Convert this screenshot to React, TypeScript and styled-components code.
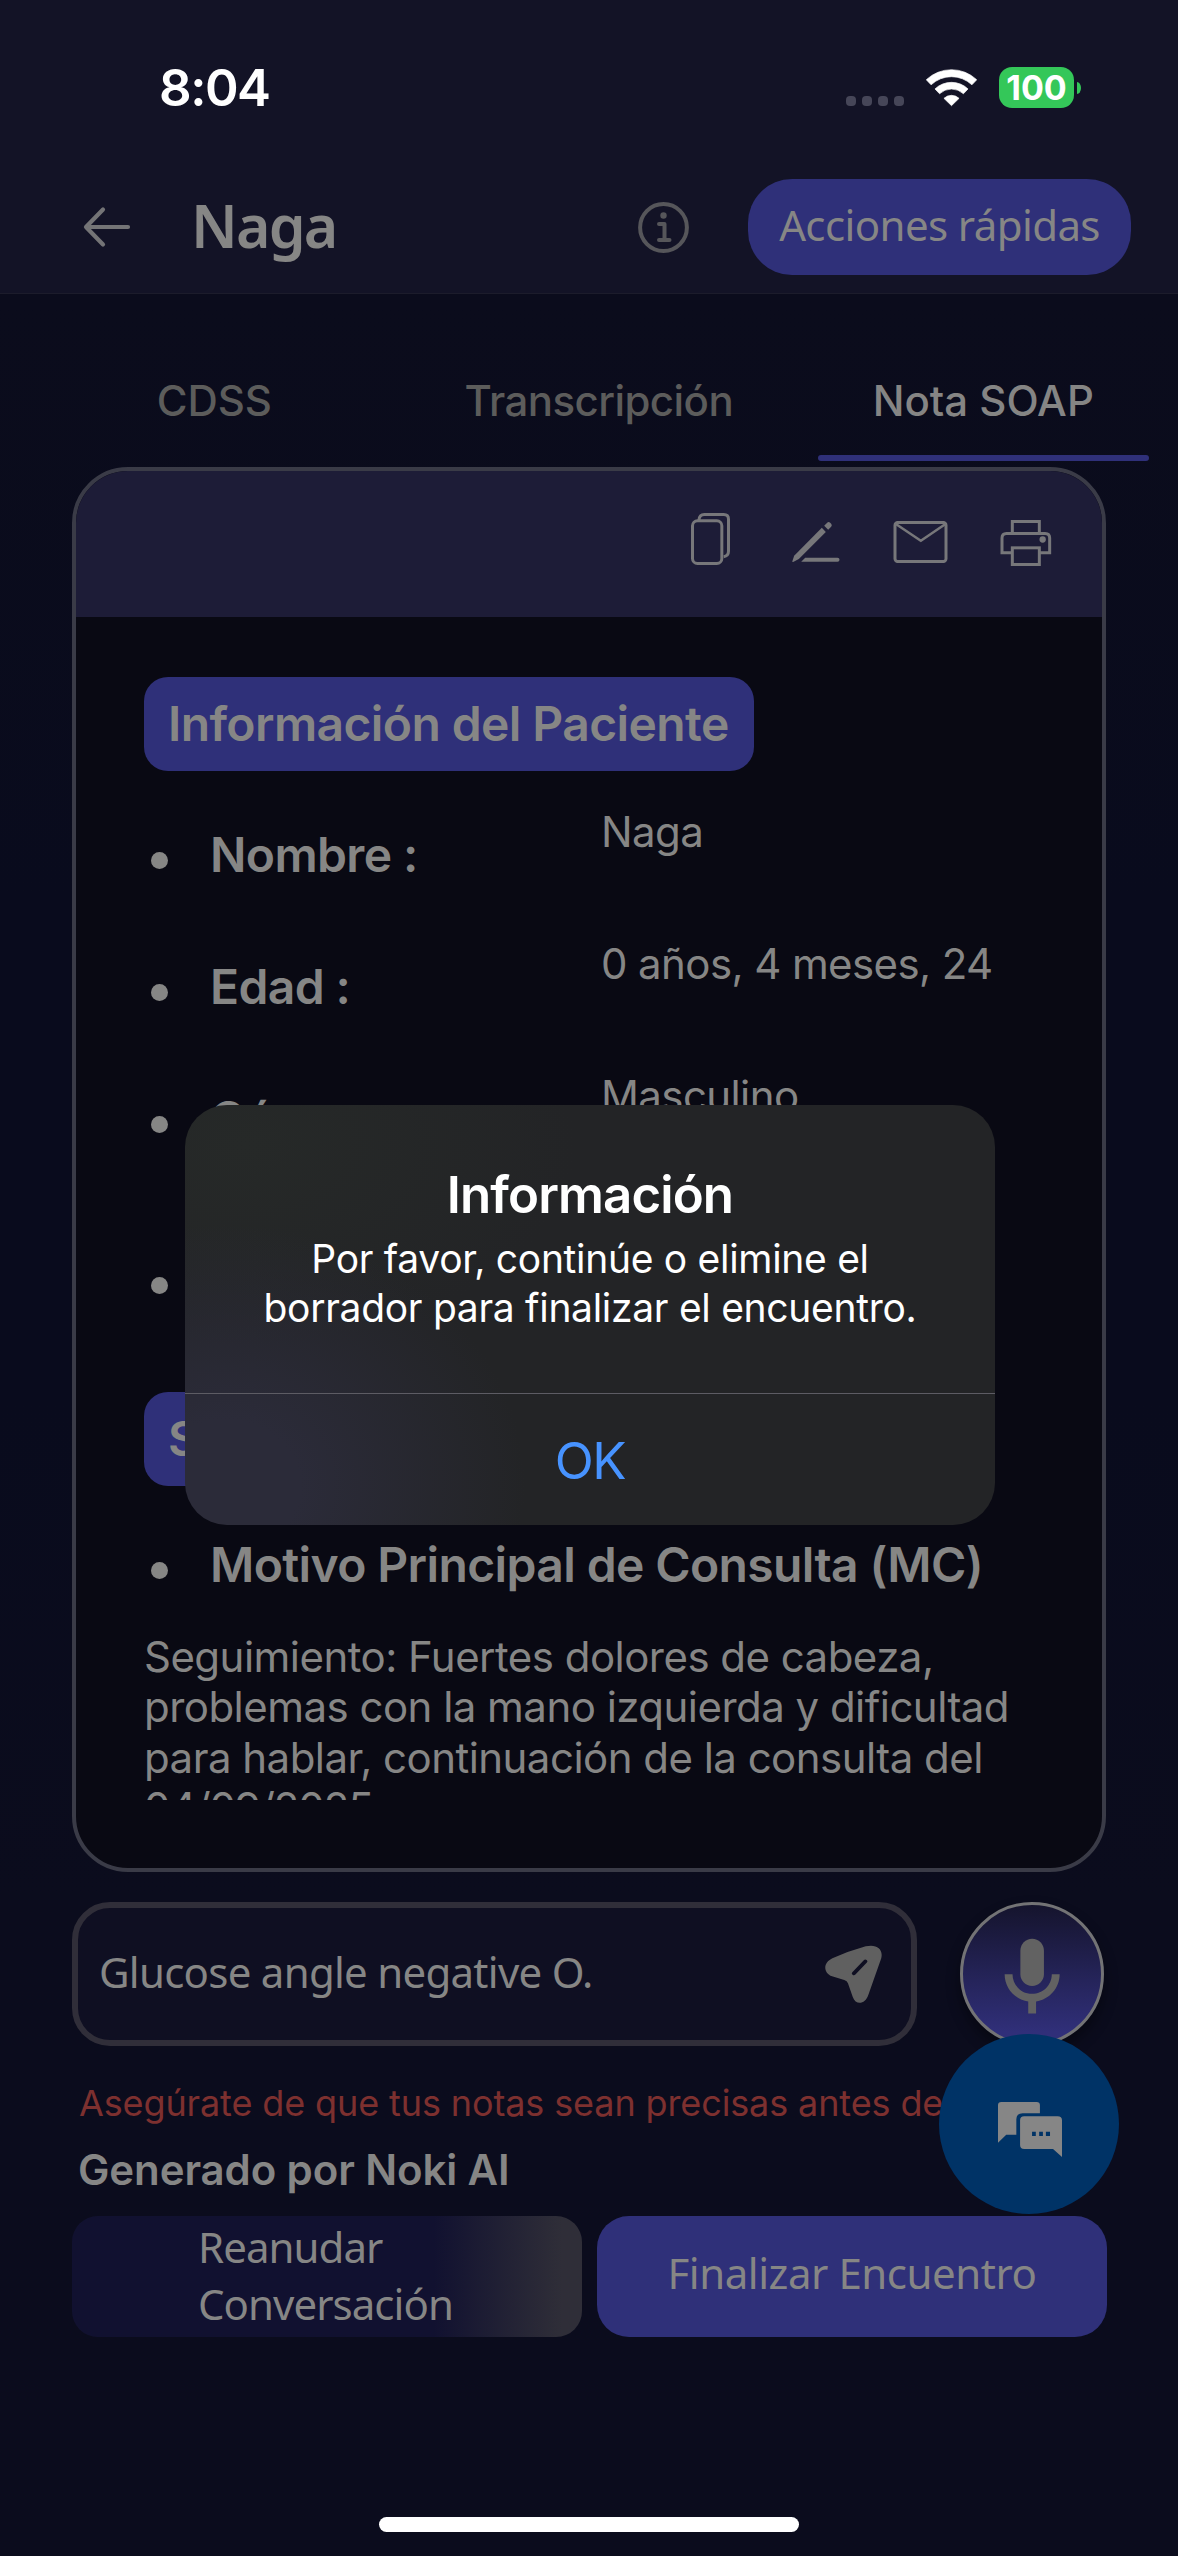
import React from 'react';
import styled, { createGlobalStyle } from 'styled-components';

const c = {
  text: '#868685',
  textDim: '#5c5c5b',
  icon: '#77777a',
  primary: '#2f3079',
  header: '#131326',
  toolbar: '#1d1c37',
  sheet: '#090913',
  cardBorder: '#3a3b47',
  inputBorder: '#302e39',
};

const sans = `Inter, "Liberation Sans", sans-serif`;
const rounded = `"Noto Sans", "Open Sans", sans-serif`;

const GlobalStyle = createGlobalStyle`
  *, *::before, *::after { box-sizing: border-box; }
  body { margin: 0; background: #0b0c1d; }
  button { border: 0; padding: 0; margin: 0; background: none; color: inherit; font: inherit; }
  svg { display: block; flex: none; }
`;

const Screen = styled.main`
  position: relative;
  display: flex;
  flex-direction: column;
  width: 1178px;
  height: 2556px;
  overflow: hidden;
  background: linear-gradient(#0b0c1c 300px, #090b1d 900px, #090b1d 1400px, #0b0c1d 1900px);
  color: ${c.text};
  font-family: ${sans};
`;

/* ---------- header ---------- */

const Header = styled.header`
  height: 294px;
  background: ${c.header};
  border-bottom: 1px solid #1c1c2b;
`;

const StatusBar = styled.div`
  display: flex;
  align-items: center;
  height: 175px;
  padding: 0 97px 0 159px;
  color: #fff;
`;

const Clock = styled.time`
  flex: 1;
  font-size: 51px;
  font-weight: 600;
  letter-spacing: -1.5px;
`;

const Signal = styled.div`
  display: flex;
  gap: 6px;
  margin: 27px 22px 0 0;
`;

const SignalDot = styled.i`
  width: 10px;
  height: 10px;
  border-radius: 4px;
  background: #464658;
`;

const Battery = styled.div`
  display: flex;
  align-items: center;
  justify-content: center;
  width: 75px;
  height: 41px;
  margin: 0 3px 0 22px;
  border-radius: 13px;
  background: #34c759;
  font-size: 34px;
  font-weight: 700;
  line-height: 41px;
`;

const BatteryNub = styled.i`
  width: 4px;
  height: 12px;
  border-radius: 0 4px 4px 0 / 0 6px 6px 0;
  background: #34c759;
`;

const NavBar = styled.nav`
  display: flex;
  align-items: center;
  height: 104px;
  padding: 0 47px 0 82px;
`;

const Title = styled.h1`
  flex: 1;
  margin: 0 0 5px 59px;
  font: 600 59px/80px ${rounded};
  letter-spacing: -1.8px;
`;

const QuickActions = styled.button`
  width: 383px;
  height: 96px;
  margin-left: 59px;
  padding-bottom: 4px;
  border-radius: 44px;
  background: ${c.primary};
  font: 400 42px/60px ${rounded};
  letter-spacing: -0.6px;
`;

/* ---------- tabs ---------- */

const Tabs = styled.div`
  display: grid;
  grid-template-columns: repeat(3, 384.5px);
  height: 173px;
  padding: 77px 0 0 22px;
`;

const Tab = styled.button<{ $active?: boolean }>`
  display: flex;
  flex-direction: column;
  align-items: center;
  color: ${(p) => (p.$active ? '#858584' : c.textDim)};
  font-size: 42px;
  font-weight: 500;
  line-height: 60px;

  &::after {
    content: '';
    width: 331px;
    height: 6px;
    margin-top: 24px;
    border-radius: 3px;
    background: ${(p) => (p.$active ? c.primary : 'transparent')};
  }
`;

const TabLabel = styled.span<{ $tracking: number }>`
  letter-spacing: ${(p) => p.$tracking}px;
`;

/* ---------- note card ---------- */

const Card = styled.section`
  height: 1405px;
  margin: 0 72px;
  padding-bottom: 68px;
  overflow: hidden;
  border: 4px solid ${c.cardBorder};
  border-radius: 56px;
  background: ${c.sheet};
`;

const Toolbar = styled.div`
  display: flex;
  align-items: center;
  justify-content: flex-end;
  height: 146px;
  padding: 2px 24px 0 0;
  background: ${c.toolbar};
`;

const Note = styled.div`
  height: 1183px;
  padding: 60px 68px 0;
  overflow: hidden;
`;

const SectionBadge = styled.h2`
  width: fit-content;
  height: 94px;
  margin: 0;
  padding: 0 25px 0 24px;
  border-radius: 24px;
  background: ${c.primary};
  font-size: 48px;
  font-weight: 600;
  line-height: 94px;
  letter-spacing: -0.6px;
`;

const Rows = styled.ul<{ $top: number }>`
  margin: ${(p) => p.$top}px 0 0;
  padding: 0;
  list-style: none;
`;

const Row = styled.li<{ $height: number }>`
  display: flex;
  height: ${(p) => p.$height}px;
  padding-left: 7px;
  white-space: nowrap;

  &::before {
    content: '';
    flex: none;
    width: 17px;
    height: 17px;
    margin: 46px 42px 0 0;
    border-radius: 50%;
    background: ${c.text};
  }
`;

const Label = styled.h3`
  width: 391px;
  margin: 18px 0 0;
  font-size: 48px;
  font-weight: 600;
  line-height: 62px;
  letter-spacing: -0.62px;
`;

const Value = styled.span`
  padding-top: 1px;
  font-size: 42px;
  line-height: 50px;
  letter-spacing: -0.6px;
`;

const Paragraph = styled.p`
  margin: 0;
  font-size: 42px;
  line-height: 50.3px;
  letter-spacing: -0.53px;
  white-space: nowrap;
`;

const DateText = styled.time`
  letter-spacing: -1.1px;
`;

/* ---------- composer ---------- */

const Composer = styled.div`
  display: flex;
  gap: 43px;
  margin: 30px 72px 0;
`;

const InputBox = styled.div`
  display: flex;
  align-items: center;
  justify-content: space-between;
  width: 845px;
  height: 144px;
  padding: 0 29px 0 21px;
  border: 6px solid ${c.inputBorder};
  border-radius: 38px;
  background: #0f0f22;
`;

const InputText = styled.span`
  padding-bottom: 4px;
  font: 400 42px/60px ${rounded};
  letter-spacing: -0.73px;
`;

const MicButton = styled.button`
  display: flex;
  align-items: center;
  justify-content: center;
  width: 144px;
  height: 144px;
  padding-top: 8px;
  border: 3px solid #737375;
  border-radius: 50%;
  background: linear-gradient(#15142d, #302f79 92%);
  box-shadow: 0 8px 14px rgba(0, 0, 0, 0.4);
`;

const Warning = styled.p`
  margin: 35px 72px 0 79px;
  overflow: hidden;
  color: #7d302f;
  font-size: 36px;
  line-height: 44px;
  letter-spacing: -0.12px;
  white-space: nowrap;
`;

const Credit = styled.p`
  margin: 15px 78px 0;
  font-size: 42px;
  font-weight: 600;
  line-height: 60px;
  letter-spacing: -0.11px;
`;

const Actions = styled.div`
  display: grid;
  grid-template-columns: 1fr 1fr;
  gap: 15px;
  height: 121px;
  margin: 16px 71px 0 72px;
`;

const ActionButton = styled.button<{ $primary?: boolean }>`
  padding: ${(p) => (p.$primary ? '0 0 7px' : '0 0 3px 126px')};
  border-radius: ${(p) => (p.$primary ? 32 : 26)}px;
  background: ${(p) =>
    p.$primary ? c.primary : 'linear-gradient(90deg, #111130 71%, #2f2e38 96%)'};
  font: 400 42px/57.5px ${rounded};
  letter-spacing: ${(p) => (p.$primary ? -0.45 : -0.95)}px;
  text-align: ${(p) => (p.$primary ? 'center' : 'left')};
`;

const HomeIndicator = styled.div`
  width: 420px;
  height: 15px;
  margin: auto auto 24px;
  border-radius: 8px;
  background: #fff;
`;

/* ---------- overlays ---------- */

const ChatBubbleButton = styled.button`
  position: absolute;
  left: 939px;
  top: 2034px;
  display: flex;
  align-items: center;
  justify-content: center;
  width: 180px;
  height: 180px;
  padding: 10px 0 0 2px;
  border-radius: 50%;
  background: #003366;
`;

const Alert = styled.div`
  position: absolute;
  left: 185px;
  top: 1105px;
  display: flex;
  flex-direction: column;
  width: 810px;
  height: 420px;
  border-radius: 42px;
  background: radial-gradient(ellipse 300px 260px at 40px 380px, #2b2b39 25%, rgba(42, 41, 54, 0) 100%),
    radial-gradient(ellipse 330px 200px at 60px 40px, #262928, rgba(38, 41, 40, 0)), #232426;
  color: #fff;
  text-align: center;
`;

const AlertTitle = styled.h2`
  margin: 60px 0 0;
  font-size: 51px;
  font-weight: 600;
  line-height: 60px;
  letter-spacing: -0.9px;
`;

const AlertMessage = styled.p`
  margin: 10px 0 0;
  font-size: 39px;
  line-height: 48.5px;
  letter-spacing: -0.3px;
`;

const AlertButton = styled.button`
  height: 132px;
  margin-top: auto;
  padding-top: 2px;
  border-top: 1px solid #5d5c64;
  color: #4793ff;
  font-size: 51px;
  line-height: 129px;
  letter-spacing: -1.5px;
`;

/* ---------- icons ---------- */

const SIN = 0.688;
const COS = 0.725;

const ring = (outer: number, inner: number) =>
  `M${-outer * SIN} ${-outer * COS}A${outer} ${outer} 0 0 1 ${outer * SIN} ${-outer * COS}` +
  `L${inner * SIN} ${-inner * COS}A${inner} ${inner} 0 0 0 ${-inner * SIN} ${-inner * COS}Z`;

const WifiIcon = () => (
  <svg width="51" height="38" viewBox="-76.5 -112 153 114" fill="#fff" stroke="#fff" strokeWidth="2" strokeLinejoin="round">
    <path d={ring(110, 89)} />
    <path d={ring(72, 52)} />
    <path d={`M0 -2L${-33 * SIN} ${-33 * COS}A33 33 0 0 1 ${33 * SIN} ${-33 * COS}Z`} />
  </svg>
);

const BackIcon = () => (
  <svg width="50" height="44" viewBox="0 0 50 44" fill="none" stroke="#747476" strokeWidth="4.2" strokeLinecap="round" strokeLinejoin="round">
    <path d="M46 22H4M21 4.500L4 22l17 17.500" />
  </svg>
);

const InfoIcon = () => (
  <svg width="51" height="51" viewBox="-25.5 -25.500 51 51" fill="none" stroke="#56565a" strokeWidth="4" strokeLinecap="round" strokeLinejoin="round">
    <circle r="23.4" />
    <path d="M-4.500 -3.500H1V12.500M-4.500 12.500H6" />
    <circle cy="-12" r="3.200" fill="#56565a" stroke="none" />
  </svg>
);

const ToolSvg = ({ cx, children }: { cx: number; children: React.ReactNode }) => (
  <svg width="105" height="110" viewBox={`${cx - 157.5} 0 315 330`} fill="none" stroke={c.icon} strokeWidth="9">
    {children}
  </svg>
);

const CopyIcon = () => (
  <ToolSvg cx={151.5}>
    <rect x="97.500" y="92.500" width="88" height="128" rx="15" />
    <path d="M117 90Q118 73.500 133 73.500H191Q205.500 73.500 205.500 88V184Q205.500 198 191 200" />
  </ToolSvg>
);

const PenIcon = () => (
  <ToolSvg cx={465}>
    <g fill={c.icon} stroke="none">
      <path d="M395 215L401 197L484 113L496 126L415 207L398 216Z" />
      <path d="M491 107L500 98Q504 94 509 98L512 101Q516 106 512 110L503 119Z" />
      <path d="M434 203H531Q537 203 537 209T531 215H422Z" />
    </g>
  </ToolSvg>
);

const MailIcon = () => (
  <ToolSvg cx={783}>
    <rect x="706.500" y="97.500" width="153" height="117" rx="8" />
    <path d="M709 102L784 152L858 102" strokeWidth="7.500" />
  </ToolSvg>
);

const PrintIcon = () => (
  <ToolSvg cx={1097}>
    <path d="M1057.500 128V94.500H1138.500V128" />
    <path d="M1057 188H1026.500V144Q1026.500 130.500 1040 130.500H1156Q1169.500 130.500 1169.500 144V188H1139" />
    <rect x="1057.500" y="173.500" width="81" height="50" />
    <circle cx="1148.500" cy="148.500" r="9.500" fill={c.icon} stroke="none" />
  </ToolSvg>
);

const SendIcon = () => (
  <svg width="57" height="58" viewBox="626 194 154 174" preserveAspectRatio="none">
    <path
      fill="#606060"
      d="M736 198C765 190 784 206 778 234L743 344C735 372 709 376 701 350L688 309Q686 302 678 299L645 288C621 278 620 247 646 234Q690 212 736 198Z"
    />
    <path d="M704 279L735 243" stroke="#0f0f22" strokeWidth="11" strokeLinecap="round" />
  </svg>
);

const MicIcon = () => (
  <svg width="94.300" height="94.300" viewBox="0 0 24 24" fill="#626262">
    <path d="M12 14c1.660 0 3-1.340 3-3V5c0-1.660-1.340-3-3-3S9 3.340 9 5v6c0 1.660 1.340 3 3 3z" />
    <path d="M17 11c0 2.760-2.240 5-5 5s-5-2.240-5-5H5c0 3.530 2.610 6.430 6 6.920V21h2v-3.080c3.390-.490 6-3.390 6-6.920h-2z" />
  </svg>
);

const ChatIcon = () => (
  <svg width="64" height="55" viewBox="1088 666 171 165" preserveAspectRatio="none" fill="#868686">
    <path d="M1088 675Q1088 666 1097 666H1191Q1200 666 1200 675V700H1154Q1137 700 1137 718V764H1110L1088 788Z" />
    <path d="M1147 721Q1147 709 1158 709H1247Q1259 709 1259 721V831L1235 807H1158Q1147 807 1147 795Z" />
    <path fill="#003366" d="M1179 755h10v13h-10zM1198 755h10v13h-10zM1216 755h11v13h-11z" />
  </svg>
);

/* ---------- screen ---------- */

const tabs = [
  { label: 'CDSS', tracking: -0.1 },
  { label: 'Transcripción', tracking: -0.55 },
  { label: 'Nota SOAP', tracking: 0, active: true },
];

const patient = [
  { label: 'Nombre :', value: 'Naga', height: 132 },
  { label: 'Edad :', value: '0 años, 4 meses, 24', height: 132 },
  { label: 'Género :', value: 'Masculino', height: 161 },
  { label: '', value: '', height: 161 },
];

export default function App() {
  return (
    <>
      <GlobalStyle />
      <Screen>
        <Header>
          <StatusBar>
            <Clock>8:04</Clock>
            <Signal>
              {[0, 1, 2, 3].map((i) => (
                <SignalDot key={i} />
              ))}
            </Signal>
            <WifiIcon />
            <Battery>100</Battery>
            <BatteryNub />
          </StatusBar>
          <NavBar>
            <BackIcon />
            <Title>Naga</Title>
            <InfoIcon />
            <QuickActions>Acciones rápidas</QuickActions>
          </NavBar>
        </Header>

        <Tabs>
          {tabs.map((t) => (
            <Tab key={t.label} $active={t.active}>
              <TabLabel $tracking={t.tracking}>{t.label}</TabLabel>
            </Tab>
          ))}
        </Tabs>

        <Card>
          <Toolbar>
            <CopyIcon />
            <PenIcon />
            <MailIcon />
            <PrintIcon />
          </Toolbar>
          <Note>
            <SectionBadge>Información del Paciente</SectionBadge>
            <Rows $top={35}>
              {patient.map((r, i) => (
                <Row key={i} $height={r.height}>
                  <Label>{r.label}</Label>
                  <Value>{r.value}</Value>
                </Row>
              ))}
            </Rows>
            <SectionBadge>Subjetivo</SectionBadge>
            <Rows $top={30}>
              <Row $height={116}>
                <Label>Motivo Principal de Consulta (MC)</Label>
              </Row>
            </Rows>
            <Paragraph>
              Seguimiento: Fuertes dolores de cabeza,
              <br />
              problemas con la mano izquierda y dificultad
              <br />
              para hablar, continuación de la consulta del
              <br />
              <DateText>04/09/2025</DateText>
            </Paragraph>
          </Note>
        </Card>

        <Composer>
          <InputBox>
            <InputText>Glucose angle negative O.</InputText>
            <SendIcon />
          </InputBox>
          <MicButton>
            <MicIcon />
          </MicButton>
        </Composer>

        <Warning>Asegúrate de que tus notas sean precisas antes de</Warning>
        <Credit>Generado por Noki AI</Credit>

        <Actions>
          <ActionButton>
            Reanudar
            <br />
            Conversación
          </ActionButton>
          <ActionButton $primary>Finalizar Encuentro</ActionButton>
        </Actions>

        <HomeIndicator />

        <ChatBubbleButton>
          <ChatIcon />
        </ChatBubbleButton>

        <Alert>
          <AlertTitle>Información</AlertTitle>
          <AlertMessage>
            Por favor, continúe o elimine el
            <br />
            borrador para finalizar el encuentro.
          </AlertMessage>
          <AlertButton>OK</AlertButton>
        </Alert>
      </Screen>
    </>
  );
}
